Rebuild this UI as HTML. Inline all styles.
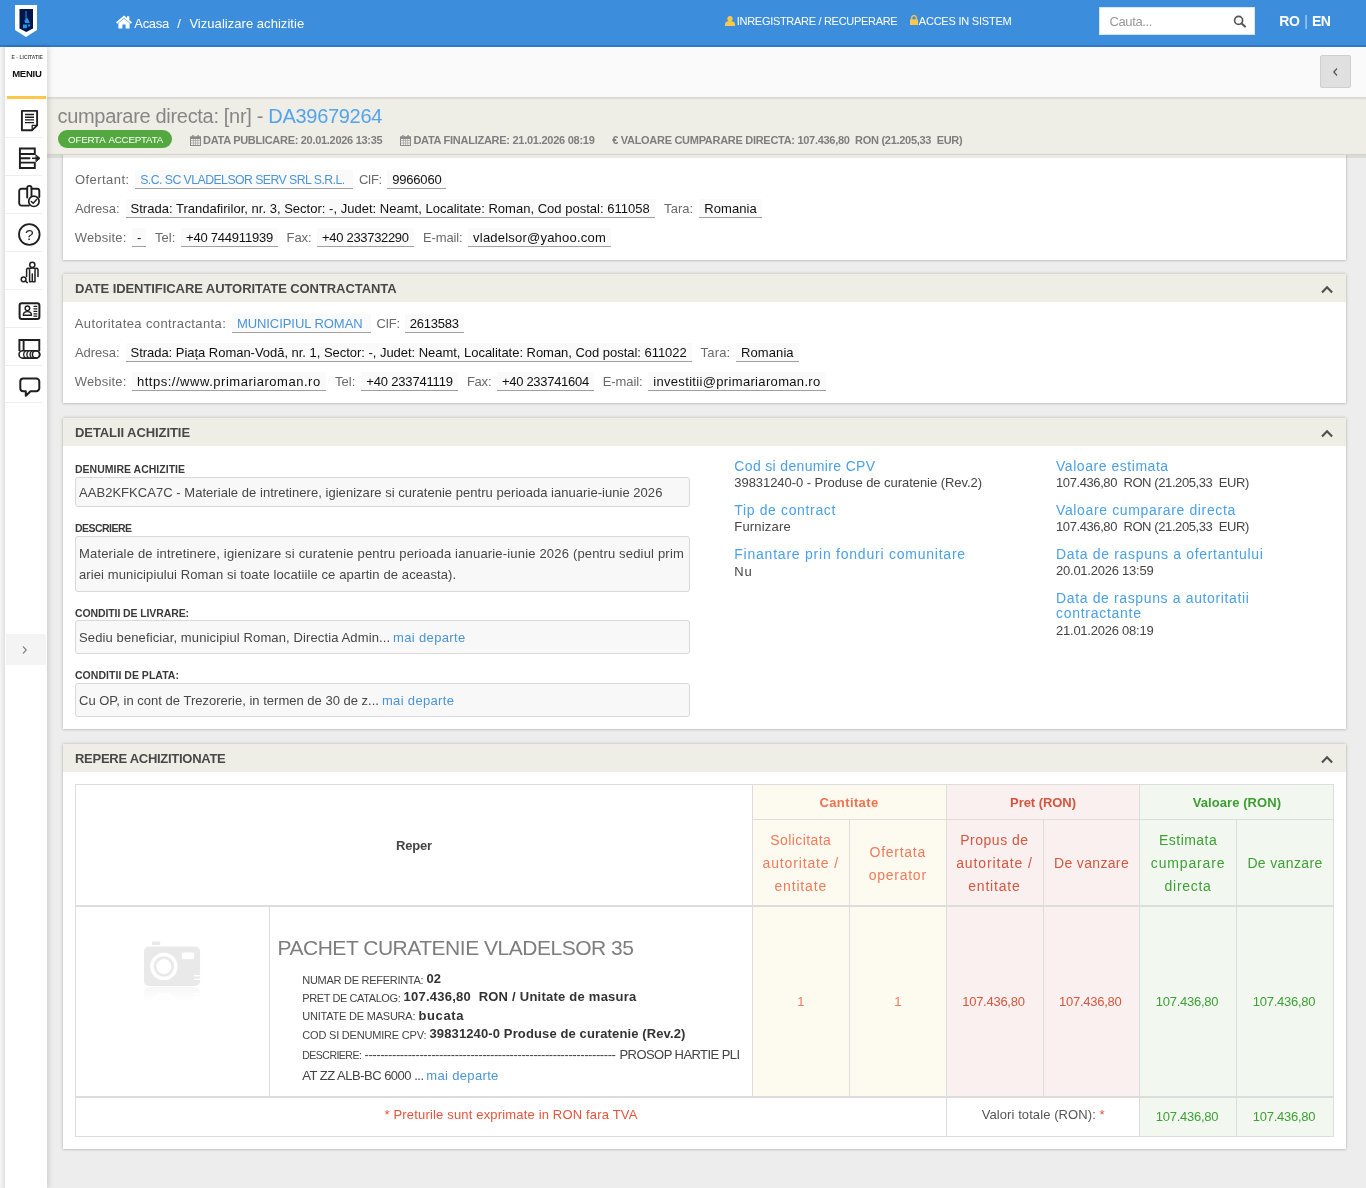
<!DOCTYPE html>
<html lang="ro">
<head>
<meta charset="utf-8">
<title>Vizualizare achizitie</title>
<style>
*{box-sizing:border-box}
html,body{margin:0;padding:0}
body{width:1366px;height:1188px;position:relative;overflow:hidden;background:#ededed;font-family:"Liberation Sans",sans-serif;font-size:13px;color:#555;line-height:1}
a{color:#4a94d8;text-decoration:none}
#wrap{position:absolute;left:0;top:0;width:1366px;height:1188px;will-change:transform}
.abs,.t,svg{position:absolute}
.t{white-space:nowrap}
#hdr{position:absolute;left:0;top:0;width:1366px;height:47px;background:#3c8ddc;border-bottom:2px solid #2f78c2}
#search{position:absolute;left:1099px;top:7px;width:156px;height:28px;background:#fff;border:1px solid #d8e6f3}
#tool{position:absolute;left:47px;top:47px;width:1319px;height:50px;background:#fafafa}
#back{position:absolute;left:1320px;top:55px;width:31px;height:33px;background:#e0e0e0;border:1px solid #cfcfcf;border-radius:2px}
#strip{position:absolute;left:0;top:47px;width:5px;height:1141px;background:linear-gradient(90deg,#f4f4f4,#e6e6e6)}
#side{position:absolute;left:5px;top:47px;width:42px;height:1141px;background:#fff;box-shadow:2px 0 5px rgba(0,0,0,.13);z-index:4}
#side .yl{position:absolute;left:2px;top:49px;width:39px;height:3px;background:#fdc748}
#side .sep{position:absolute;left:0;width:37px;height:1px;background:#eeeeee}
#exp{position:absolute;left:1px;top:587px;width:40px;height:31px;background:#f4f4f4}
#tbar{position:absolute;left:47px;top:97px;width:1319px;height:58px;background:#eeede6;border-top:1px solid #d9d8d1;border-bottom:1px solid #d3d2cb;box-shadow:inset 0 2px 2px -1px rgba(0,0,0,.07),0 3px 0 rgba(110,105,80,.14);z-index:3}
#badge{position:absolute;left:58px;top:130px;width:114px;height:18px;border-radius:9px;background:#53a93f;z-index:5}
.z5{z-index:5}
.panel{position:absolute;left:63px;width:1283px;background:#fff;box-shadow:0 0 3px rgba(0,0,0,.24),0 1px 2px rgba(0,0,0,.08)}
.ph{position:absolute;left:63px;width:1283px;height:28px;background:#eeede6}
.f{position:absolute;height:19px;background:#fafafa;border-bottom:1px solid #a0a0a0}
.bx{position:absolute;left:75px;width:615px;background:#f8f8f8;border:1px solid #d9d9d9;border-radius:3px}
.c{position:absolute;border-left:1px solid #ddd;border-top:1px solid #ddd}
.cy{background:#fdfbf0}
.cr{background:#f9f0ef}
.cg{background:#f2f8f0}
.ln{position:absolute;background:#ddd}
</style>
</head>
<body>
<div id="wrap">
<div id="hdr"></div>
<svg style="left:15px;top:5px;z-index:6" width="22" height="32" viewBox="0 0 22 32"><path d="M0 0H22V25L11 32L0 25Z" fill="#fff"/><path d="M4.500 4H18V23.500L11.200 27L4.500 23.500Z" fill="#04154a"/><path d="M10.500 6h1v8h-1z M9.500 15l3-2 2.500 5h-5z M8 19.500h4v3.800H8z M13 19.500h2.200v2H13z" fill="#1c9be8"/></svg>
<svg style="left:115.500px;top:15px" width="16" height="14" viewBox="0 0 16 14"><path d="M8 .5L0 7.300l1.200 1.400L8 3l6.800 5.700 1.200-1.400L13.300 5V1.300h-2.300v1.800z" fill="#fff"/><path d="M2.400 8.300L8 3.700l5.600 4.600v5.200H9.600V9.600H6.400v3.900h-4z" fill="#fff"/></svg>
<div class="t" style="left:134.3px;top:16.0px;font-size:13px;line-height:16px;color:#fff;letter-spacing:-0.308px;">Acasa</div>
<div class="t" style="left:177.3px;top:16.0px;font-size:13px;line-height:16px;color:#fff;">/</div>
<div class="t" style="left:189.4px;top:16.0px;font-size:13px;line-height:16px;color:#fff;letter-spacing:0.041px;">Vizualizare achizitie</div>
<svg style="left:725px;top:16px" width="10" height="10" viewBox="0 0 10 10"><circle cx="5" cy="2.700" r="2.600" fill="#fbc84b"/><path d="M0 10V8.300C0 6 2 5 5 5s5 1 5 3.300V10z" fill="#fbc84b"/></svg>
<div class="t" style="left:736.8px;top:15.0px;font-size:11px;line-height:13px;color:#fff;letter-spacing:-0.300px;">INREGISTRARE / RECUPERARE</div>
<svg style="left:910px;top:15px" width="8" height="10" viewBox="0 0 8 10"><path d="M0 4.300h8V10H0z" fill="#fbc84b"/><path d="M1.700 4.500V3a2.300 2.300 0 0 1 4.600 0v1.500" fill="none" stroke="#fbc84b" stroke-width="1.300"/></svg>
<div class="t" style="left:918.8px;top:15.0px;font-size:11px;line-height:13px;color:#fff;letter-spacing:-0.218px;">ACCES IN SISTEM</div>
<div id="search"></div>
<div class="t" style="left:1109.5px;top:14.0px;font-size:13px;line-height:16px;color:#999;letter-spacing:-0.379px;">Cauta...</div>
<svg style="left:1232.500px;top:15px" width="14" height="13" viewBox="0 0 14 13"><circle cx="5.600" cy="5.400" r="4" fill="none" stroke="#555" stroke-width="1.700"/><path d="M8.600 8.400L12 11.600" stroke="#555" stroke-width="2.100" stroke-linecap="round"/></svg>
<div class="t" style="left:1279.2px;top:13.0px;font-size:14px;line-height:17px;color:#fff;font-weight:bold;letter-spacing:-0.250px;">RO</div>
<div class="t" style="left:1304.3px;top:13.0px;font-size:14px;line-height:17px;color:#b9d6f2;">|</div>
<div class="t" style="left:1312.0px;top:13.0px;font-size:14px;line-height:17px;color:#fff;font-weight:bold;letter-spacing:-0.477px;">EN</div>
<div id="tool"></div>
<div id="back"><svg style="left:11px;top:11px" width="7" height="10" viewBox="0 0 7 10"><path d="M5 1.500L1.800 5 5 8.500" fill="none" stroke="#555" stroke-width="1.200"/></svg></div>
<div id="strip"></div>
<div id="side"><div class="yl"></div>
<div class="sep" style="top:90px"></div>
<div class="sep" style="top:128px"></div>
<div class="sep" style="top:166px"></div>
<div class="sep" style="top:204px"></div>
<div class="sep" style="top:242px"></div>
<div class="sep" style="top:280px"></div>
<div class="sep" style="top:318px"></div>
<div class="sep" style="top:355px"></div>
<svg style="left:0;top:0" width="42" height="370" viewBox="5 47 42 370" fill="none" stroke="#1f1f1f" stroke-width="1.900" stroke-linejoin="round" stroke-linecap="round">
<!-- 1 document -->
<path d="M21.900 110.900H37.100V125.300L32.200 130.200H21.900Z"/><path d="M32.200 130.200V125.300H37.100" stroke-width="1.300"/>
<path d="M25 114.500H34M25 117.200H34M25 119.900H34M25 122.600H34" stroke-width="1.400" stroke-linecap="butt"/>
<!-- 2 list arrow -->
<path d="M19.900 148.500H34.800V154H19.900ZM19.900 162.600H34.800V168H19.900ZM19.900 154V162.600M19.900 158.300H29.500" stroke-linejoin="miter"/>
<path d="M32 158.300H37" stroke-width="1.500" stroke-linecap="butt"/><path d="M36.300 155.200L40 158.300L36.300 161.400Z" fill="#1f1f1f" stroke-width="1"/>
<!-- 3 books check -->
<path d="M27 188.700H21.500a2.300 2.300 0 0 0-2.300 2.300V203.300a2.300 2.300 0 0 0 2.300 2.300H29"/>
<path d="M31.500 188.700H37a2.300 2.300 0 0 1 2.300 2.300V197"/>
<path d="M27.200 197.500V187.800a1.900 1.900 0 0 1 1.900-1.900h.5a1.900 1.900 0 0 1 1.900 1.900V196.500"/>
<circle cx="33.900" cy="201.300" r="5.200" fill="#fff" stroke-width="1.700"/><path d="M31.300 201.500L33.200 203.300L36.600 199.600" stroke-width="1.500"/>
<!-- 4 question -->
<circle cx="29.300" cy="234.500" r="10.300" stroke-width="1.800"/>
<text x="29.300" y="240" font-family="Liberation Sans, sans-serif" font-size="15.500" text-anchor="middle" fill="#1f1f1f" stroke="none">?</text>
<!-- 5 person search -->
<g stroke-width="1.500"><circle cx="32.300" cy="264.800" r="2.600"/>
<path d="M29.600 281.800V269.600a1.500 1.500 0 0 0-3 .4V276.500M35 281.800V269.600a1.500 1.500 0 0 1 3 .4V276.500M28 268.600Q32.300 267.400 36.600 268.600M32.300 274V281.800M29.600 281.800H31M33.600 281.800H35"/>
<circle cx="23.600" cy="279.300" r="2.400"/><path d="M25.400 281L27.300 282.600"/></g>
<!-- 6 id card -->
<rect x="19.600" y="303.300" width="19.800" height="15.600" rx="2.200" stroke-width="2"/>
<g stroke-width="1.400"><circle cx="27.400" cy="308.300" r="2.300"/><path d="M23.300 315.300Q23.300 311.600 27.400 311.600Q31.500 311.600 31.500 315.300Z"/>
<path d="M33.500 306.300H37.300M33.500 308.800H37.300M33.500 311.300H37.300M33.500 313.800H37.300M33.500 316.100H37.300" stroke-linecap="butt" stroke-width="1.300"/></g>
<!-- 7 shelf -->
<path d="M19.400 351V340H39.300V351M23.600 340V350.500" stroke-linejoin="miter" stroke-linecap="butt"/>
<g stroke-width="1.600"><rect x="19" y="350.700" width="20.800" height="7.400" rx="3.700"/><circle cx="36" cy="354.400" r="3.600"/>
<path d="M25.500 351A4 4 0 0 0 25.500 357.800M28.700 351A4 4 0 0 0 28.700 357.800M31.900 351A4 4 0 0 0 31.900 357.800" stroke-width="1.300"/></g>
<!-- 8 bubble -->
<path d="M23.300 378.500H36.300a3 3 0 0 1 3 3V388.200a3 3 0 0 1-3 3H30.500L25.800 395.800V391.200H23.300a3 3 0 0 1-3-3V381.500a3 3 0 0 1 3-3Z" stroke-width="2"/>
</svg>

<div id="exp"><svg style="left:15.300px;top:10.700px" width="7" height="10" viewBox="0 0 7 10"><path d="M2 1.500L5.200 5 2 8.500" fill="none" stroke="#666" stroke-width="1.100"/></svg></div>
</div>
<div class="t" style="left:11.5px;top:54.0px;font-size:5px;line-height:6px;color:#555;font-weight:bold;letter-spacing:0.043px;z-index:5;">E - LICITATIE</div>
<div class="t" style="left:12.2px;top:68.0px;font-size:9.5px;line-height:11px;color:#111;font-weight:bold;letter-spacing:-0.245px;z-index:5;">MENIU</div>
<div id="tbar"></div>
<div class="t" style="left:57.5px;top:104.0px;font-size:20px;line-height:24px;color:#868686;letter-spacing:-0.312px;z-index:5;">cumparare directa: [nr] - <span style="color:#54a4ec">DA39679264</span></div>
<div id="badge"></div>
<div class="t" style="left:68.0px;top:133.6px;font-size:9.7px;line-height:12px;color:#fff;letter-spacing:-0.156px;z-index:6;word-spacing:1.500px;">OFERTA ACCEPTATA</div>
<svg style="left:189.700px;top:134.500px;z-index:5" width="11" height="11" viewBox="0 0 11 11"><path d="M2.200 0h1.400v2.400H2.200zM7.400 0h1.400v2.400H7.400z" fill="#8a8a8a"/><path d="M0 1.300h11V11H0z" fill="#8a8a8a"/><path d="M1 4h2v1.500H1zM3.500 4h1.800v1.500H3.500zM5.800 4h1.800v1.500H5.800zM8.100 4H10v1.500H8.100zM1 6h2v1.700H1zM3.500 6h1.800v1.700H3.500zM5.800 6h1.800v1.700H5.800zM8.100 6H10v1.700H8.100zM1 8.200h2V10H1zM3.500 8.200h1.800V10H3.500zM5.800 8.200h1.800V10H5.800zM8.100 8.200H10V10H8.100z" fill="#eeede6"/></svg>
<div class="t" style="left:203.1px;top:134.0px;font-size:11px;line-height:13px;color:#7e7e7e;font-weight:bold;letter-spacing:-0.297px;z-index:5;">DATA PUBLICARE: 20.01.2026 13:35</div>
<svg style="left:400px;top:134.500px;z-index:5" width="11" height="11" viewBox="0 0 11 11"><path d="M2.200 0h1.400v2.400H2.200zM7.400 0h1.400v2.400H7.400z" fill="#8a8a8a"/><path d="M0 1.300h11V11H0z" fill="#8a8a8a"/><path d="M1 4h2v1.500H1zM3.500 4h1.800v1.500H3.500zM5.800 4h1.800v1.500H5.800zM8.100 4H10v1.500H8.100zM1 6h2v1.700H1zM3.500 6h1.800v1.700H3.500zM5.800 6h1.800v1.700H5.800zM8.100 6H10v1.700H8.100zM1 8.200h2V10H1zM3.500 8.200h1.800V10H3.500zM5.800 8.200h1.800V10H5.800zM8.100 8.200H10V10H8.100z" fill="#eeede6"/></svg>
<div class="t" style="left:413.4px;top:134.0px;font-size:11px;line-height:13px;color:#7e7e7e;font-weight:bold;letter-spacing:-0.267px;z-index:5;">DATA FINALIZARE: 21.01.2026 08:19</div>
<div class="t" style="left:612.2px;top:134.0px;font-size:11px;line-height:13px;color:#7e7e7e;font-weight:bold;letter-spacing:-0.292px;z-index:5;">€ VALOARE CUMPARARE DIRECTA: 107.436,80&nbsp; RON (21.205,33&nbsp; EUR)</div>
<div class="panel" style="top:100px;height:159.500px"></div>
<div class="t" style="left:74.9px;top:172.0px;font-size:13px;line-height:16px;color:#6a6a6a;letter-spacing:0.458px;">Ofertant:</div>
<div class="f" style="left:135.2px;top:170.0px;width:217.8px"></div>
<div class="t" style="left:140.2px;top:173.0px;font-size:12.3px;line-height:15px;color:#4a94d8;letter-spacing:-0.557px;">S.C. SC VLADELSOR SERV SRL S.R.L.</div>
<div class="t" style="left:358.9px;top:172.0px;font-size:13px;line-height:16px;color:#6a6a6a;letter-spacing:-0.466px;">CIF:</div>
<div class="f" style="left:387.2px;top:170.0px;width:59.3px"></div>
<div class="t" style="left:392.2px;top:172.0px;font-size:13px;line-height:16px;color:#111;letter-spacing:-0.189px;">9966060</div>
<div class="t" style="left:74.9px;top:201.0px;font-size:13px;line-height:16px;color:#6a6a6a;letter-spacing:-0.016px;">Adresa:</div>
<div class="f" style="left:125.5px;top:199.0px;width:529.3px"></div>
<div class="t" style="left:130.5px;top:201.0px;font-size:13px;line-height:16px;color:#111;letter-spacing:0.015px;">Strada: Trandafirilor, nr. 3, Sector: -, Judet: Neamt, Localitate: Roman, Cod postal: 611058</div>
<div class="t" style="left:664.1px;top:201.0px;font-size:13px;line-height:16px;color:#6a6a6a;letter-spacing:0.039px;">Tara:</div>
<div class="f" style="left:699.3px;top:199.0px;width:62.5px"></div>
<div class="t" style="left:704.3px;top:201.0px;font-size:13px;line-height:16px;color:#111;letter-spacing:0.067px;">Romania</div>
<div class="t" style="left:74.7px;top:230.0px;font-size:13px;line-height:16px;color:#6a6a6a;letter-spacing:0.195px;">Website:</div>
<div class="f" style="left:131.9px;top:228.0px;width:13.7px"></div>
<div class="t" style="left:136.9px;top:230.0px;font-size:13px;line-height:16px;color:#111;letter-spacing:-0.644px;">-</div>
<div class="t" style="left:155.0px;top:230.0px;font-size:13px;line-height:16px;color:#6a6a6a;letter-spacing:0.041px;">Tel:</div>
<div class="f" style="left:181.0px;top:228.0px;width:97.0px"></div>
<div class="t" style="left:186.0px;top:230.0px;font-size:13px;line-height:16px;color:#111;letter-spacing:-0.214px;">+40 744911939</div>
<div class="t" style="left:286.6px;top:230.0px;font-size:13px;line-height:16px;color:#6a6a6a;letter-spacing:-0.099px;">Fax:</div>
<div class="f" style="left:317.1px;top:228.0px;width:96.6px"></div>
<div class="t" style="left:322.1px;top:230.0px;font-size:13px;line-height:16px;color:#111;letter-spacing:-0.318px;">+40 233732290</div>
<div class="t" style="left:423.0px;top:230.0px;font-size:13px;line-height:16px;color:#6a6a6a;letter-spacing:-0.136px;">E-mail:</div>
<div class="f" style="left:468.1px;top:228.0px;width:142.9px"></div>
<div class="t" style="left:473.1px;top:230.0px;font-size:13px;line-height:16px;color:#111;letter-spacing:0.214px;">vladelsor@yahoo.com</div>
<div class="panel" style="top:274px;height:129px"></div><div class="ph" style="top:274px"></div>
<div class="t" style="left:75.0px;top:281.0px;font-size:13px;line-height:16px;color:#484848;font-weight:bold;letter-spacing:-0.073px;">DATE IDENTIFICARE AUTORITATE CONTRACTANTA</div>
<svg style="left:1321px;top:285px" width="12" height="9" viewBox="0 0 12 9"><path d="M1 7.400L6.050 2.300L11.100 7.400" fill="none" stroke="#505050" stroke-width="2.200"/></svg>
<div class="t" style="left:74.7px;top:316.0px;font-size:13px;line-height:16px;color:#6a6a6a;letter-spacing:0.394px;">Autoritatea contractanta:</div>
<div class="f" style="left:231.9px;top:314.0px;width:139.1px"></div>
<div class="t" style="left:236.9px;top:316.0px;font-size:13px;line-height:16px;color:#4a94d8;letter-spacing:-0.059px;">MUNICIPIUL ROMAN</div>
<div class="t" style="left:376.6px;top:316.0px;font-size:13px;line-height:16px;color:#6a6a6a;letter-spacing:-0.366px;">CIF:</div>
<div class="f" style="left:404.8px;top:314.0px;width:59.0px"></div>
<div class="t" style="left:409.8px;top:316.0px;font-size:13px;line-height:16px;color:#111;letter-spacing:-0.232px;">2613583</div>
<div class="t" style="left:74.9px;top:345.0px;font-size:13px;line-height:16px;color:#6a6a6a;letter-spacing:-0.016px;">Adresa:</div>
<div class="f" style="left:125.5px;top:343.0px;width:566.2px"></div>
<div class="t" style="left:130.5px;top:345.0px;font-size:13px;line-height:16px;color:#111;letter-spacing:-0.030px;">Strada: Piața Roman-Vodă, nr. 1, Sector: -, Judet: Neamt, Localitate: Roman, Cod postal: 611022</div>
<div class="t" style="left:700.6px;top:345.0px;font-size:13px;line-height:16px;color:#6a6a6a;letter-spacing:0.179px;">Tara:</div>
<div class="f" style="left:736.0px;top:343.0px;width:62.7px"></div>
<div class="t" style="left:741.0px;top:345.0px;font-size:13px;line-height:16px;color:#111;letter-spacing:0.096px;">Romania</div>
<div class="t" style="left:74.7px;top:374.0px;font-size:13px;line-height:16px;color:#6a6a6a;letter-spacing:0.195px;">Website:</div>
<div class="f" style="left:131.9px;top:372.0px;width:193.8px"></div>
<div class="t" style="left:136.9px;top:374.0px;font-size:13px;line-height:16px;color:#111;letter-spacing:0.526px;">https://www.primariaroman.ro</div>
<div class="t" style="left:335.0px;top:374.0px;font-size:13px;line-height:16px;color:#6a6a6a;letter-spacing:0.041px;">Tel:</div>
<div class="f" style="left:361.3px;top:372.0px;width:96.5px"></div>
<div class="t" style="left:366.3px;top:374.0px;font-size:13px;line-height:16px;color:#111;letter-spacing:-0.178px;">+40 233741119</div>
<div class="t" style="left:466.9px;top:374.0px;font-size:13px;line-height:16px;color:#6a6a6a;letter-spacing:-0.224px;">Fax:</div>
<div class="f" style="left:496.9px;top:372.0px;width:97.0px"></div>
<div class="t" style="left:501.9px;top:374.0px;font-size:13px;line-height:16px;color:#111;letter-spacing:-0.287px;">+40 233741604</div>
<div class="t" style="left:602.8px;top:374.0px;font-size:13px;line-height:16px;color:#6a6a6a;letter-spacing:-0.093px;">E-mail:</div>
<div class="f" style="left:648.2px;top:372.0px;width:177.4px"></div>
<div class="t" style="left:653.2px;top:374.0px;font-size:13px;line-height:16px;color:#111;letter-spacing:0.333px;">investitii@primariaroman.ro</div>
<div class="panel" style="top:418px;height:311px"></div><div class="ph" style="top:418px"></div>
<div class="t" style="left:75.0px;top:425.0px;font-size:13px;line-height:16px;color:#484848;font-weight:bold;letter-spacing:-0.075px;">DETALII ACHIZITIE</div>
<svg style="left:1321px;top:429px" width="12" height="9" viewBox="0 0 12 9"><path d="M1 7.400L6.050 2.300L11.100 7.400" fill="none" stroke="#505050" stroke-width="2.200"/></svg>
<div class="t" style="left:75.0px;top:463.0px;font-size:10.5px;line-height:13px;color:#3a3a3a;font-weight:bold;letter-spacing:0.007px;">DENUMIRE ACHIZITIE</div>
<div class="bx" style="top:477px;height:30px"></div>
<div class="t" style="left:79.0px;top:485.0px;font-size:13px;line-height:16px;color:#474747;letter-spacing:0.039px;">AAB2KFKCA7C - Materiale de intretinere, igienizare si curatenie pentru perioada ianuarie-iunie 2026</div>
<div class="t" style="left:75.0px;top:522.0px;font-size:10.5px;line-height:13px;color:#3a3a3a;font-weight:bold;letter-spacing:-0.530px;">DESCRIERE</div>
<div class="bx" style="top:536px;height:56px"></div>
<div class="t" style="left:79.0px;top:546.0px;font-size:13px;line-height:16px;color:#474747;letter-spacing:0.180px;">Materiale de intretinere, igienizare si curatenie pentru perioada ianuarie-iunie 2026 (pentru sediul prim</div>
<div class="t" style="left:79.0px;top:567.0px;font-size:13px;line-height:16px;color:#474747;letter-spacing:0.109px;">ariei municipiului Roman si toate locatiile ce apartin de aceasta).</div>
<div class="t" style="left:75.0px;top:607.0px;font-size:10.5px;line-height:13px;color:#3a3a3a;font-weight:bold;letter-spacing:-0.105px;">CONDITII DE LIVRARE:</div>
<div class="bx" style="top:620px;height:34px"></div>
<div class="t" style="left:79.0px;top:630.0px;font-size:13px;line-height:16px;color:#474747;letter-spacing:0.118px;">Sediu beneficiar, municipiul Roman, Directia Admin...</div>
<div class="t" style="left:393.1px;top:630.0px;font-size:13px;line-height:16px;color:#474747;letter-spacing:0.340px;"><a>mai departe</a></div>
<div class="t" style="left:75.0px;top:669.0px;font-size:10.5px;line-height:13px;color:#3a3a3a;font-weight:bold;letter-spacing:0.031px;">CONDITII DE PLATA:</div>
<div class="bx" style="top:683px;height:34px"></div>
<div class="t" style="left:79.0px;top:693.0px;font-size:13px;line-height:16px;color:#474747;letter-spacing:0.006px;">Cu OP, in cont de Trezorerie, in termen de 30 de z...</div>
<div class="t" style="left:381.9px;top:693.0px;font-size:13px;line-height:16px;color:#474747;letter-spacing:0.340px;"><a>mai departe</a></div>
<div class="t" style="left:734.3px;top:458.0px;font-size:14px;line-height:17px;color:#4ba0e8;letter-spacing:0.346px;">Cod si denumire CPV</div>
<div class="t" style="left:734.3px;top:475.0px;font-size:13px;line-height:16px;color:#454545;letter-spacing:-0.052px;">39831240-0 - Produse de curatenie (Rev.2)</div>
<div class="t" style="left:734.3px;top:502.0px;font-size:14px;line-height:17px;color:#4ba0e8;letter-spacing:0.640px;">Tip de contract</div>
<div class="t" style="left:734.3px;top:519.0px;font-size:13px;line-height:16px;color:#454545;letter-spacing:0.186px;">Furnizare</div>
<div class="t" style="left:734.3px;top:546.0px;font-size:14px;line-height:17px;color:#4ba0e8;letter-spacing:0.769px;">Finantare prin fonduri comunitare</div>
<div class="t" style="left:734.3px;top:564.0px;font-size:13px;line-height:16px;color:#454545;letter-spacing:0.838px;">Nu</div>
<div class="t" style="left:1056.0px;top:458.0px;font-size:14px;line-height:17px;color:#4ba0e8;letter-spacing:0.543px;">Valoare estimata</div>
<div class="t" style="left:1056.0px;top:475.0px;font-size:13px;line-height:16px;color:#454545;letter-spacing:-0.405px;">107.436,80&nbsp; RON (21.205,33&nbsp; EUR)</div>
<div class="t" style="left:1056.0px;top:502.0px;font-size:14px;line-height:17px;color:#4ba0e8;letter-spacing:0.639px;">Valoare cumparare directa</div>
<div class="t" style="left:1056.0px;top:519.0px;font-size:13px;line-height:16px;color:#454545;letter-spacing:-0.405px;">107.436,80&nbsp; RON (21.205,33&nbsp; EUR)</div>
<div class="t" style="left:1056.0px;top:546.0px;font-size:14px;line-height:17px;color:#4ba0e8;letter-spacing:0.667px;">Data de raspuns a ofertantului</div>
<div class="t" style="left:1056.0px;top:563.0px;font-size:13px;line-height:16px;color:#454545;letter-spacing:-0.232px;">20.01.2026 13:59</div>
<div class="t" style="left:1056.0px;top:590.0px;font-size:14px;line-height:17px;color:#4ba0e8;letter-spacing:0.634px;">Data de raspuns a autoritatii</div>
<div class="t" style="left:1056.0px;top:605.0px;font-size:14px;line-height:17px;color:#4ba0e8;letter-spacing:0.720px;">contractante</div>
<div class="t" style="left:1056.0px;top:623.0px;font-size:13px;line-height:16px;color:#454545;letter-spacing:-0.232px;">21.01.2026 08:19</div>
<div class="panel" style="top:744px;height:405px"></div><div class="ph" style="top:744px"></div>
<div class="t" style="left:75.0px;top:751.0px;font-size:13px;line-height:16px;color:#484848;font-weight:bold;letter-spacing:-0.276px;">REPERE ACHIZITIONATE</div>
<svg style="left:1321px;top:755px" width="12" height="9" viewBox="0 0 12 9"><path d="M1 7.400L6.050 2.300L11.100 7.400" fill="none" stroke="#505050" stroke-width="2.200"/></svg>
<div class="abs" style="left:75px;top:784px;width:1259px;height:353px;border:1px solid #ddd"></div>
<div class="c cy" style="left:752px;top:784px;width:194px;height:36px"></div>
<div class="c cr" style="left:946px;top:784px;width:193px;height:36px"></div>
<div class="c cg" style="left:1139px;top:784px;width:194px;height:36px"></div>
<div class="c cy" style="left:752px;top:819px;width:97px;height:86px"></div>
<div class="c cy" style="left:752px;top:906px;width:97px;height:190px"></div>
<div class="c cy" style="left:849px;top:819px;width:97px;height:86px"></div>
<div class="c cy" style="left:849px;top:906px;width:97px;height:190px"></div>
<div class="c cr" style="left:946px;top:819px;width:97px;height:86px"></div>
<div class="c cr" style="left:946px;top:906px;width:97px;height:190px"></div>
<div class="c cr" style="left:1043px;top:819px;width:96px;height:86px"></div>
<div class="c cr" style="left:1043px;top:906px;width:96px;height:190px"></div>
<div class="c cg" style="left:1139px;top:819px;width:97px;height:86px"></div>
<div class="c cg" style="left:1139px;top:906px;width:97px;height:190px"></div>
<div class="c cg" style="left:1236px;top:819px;width:97px;height:86px"></div>
<div class="c cg" style="left:1236px;top:906px;width:97px;height:190px"></div>
<div class="c cg" style="left:1139px;top:1097px;width:97px;height:39px"></div>
<div class="c cg" style="left:1236px;top:1097px;width:97px;height:39px"></div>
<div class="ln" style="left:946px;top:1097px;width:1px;height:39px"></div>
<div class="ln" style="left:76px;top:904.500px;width:1257px;height:2px"></div>
<div class="ln" style="left:76px;top:1095.500px;width:1257px;height:2px"></div>
<div class="ln" style="left:269px;top:906px;width:1px;height:190px"></div>
<div class="t" style="left:396.0px;top:838.0px;font-size:13px;line-height:16px;color:#444;font-weight:bold;letter-spacing:-0.172px;">Reper</div>
<div class="t" style="left:819.5px;top:795.0px;font-size:13px;line-height:16px;color:#f2714d;font-weight:bold;letter-spacing:0.375px;">Cantitate</div>
<div class="t" style="left:1010.0px;top:795.0px;font-size:13px;line-height:16px;color:#d5553c;font-weight:bold;letter-spacing:-0.045px;">Pret (RON)</div>
<div class="t" style="left:1192.8px;top:795.0px;font-size:13px;line-height:16px;color:#3c9d31;font-weight:bold;letter-spacing:0.068px;">Valoare (RON)</div>
<div class="t" style="left:770.3px;top:832.0px;font-size:14px;line-height:17px;color:#f07a5b;letter-spacing:0.419px;">Solicitata</div>
<div class="t" style="left:762.5px;top:855.0px;font-size:14px;line-height:17px;color:#f07a5b;letter-spacing:0.862px;">autoritate /</div>
<div class="t" style="left:774.5px;top:878.0px;font-size:14px;line-height:17px;color:#f07a5b;letter-spacing:0.820px;">entitate</div>
<div class="t" style="left:869.5px;top:844.0px;font-size:14px;line-height:17px;color:#f07a5b;letter-spacing:0.738px;">Ofertata</div>
<div class="t" style="left:868.8px;top:867.0px;font-size:14px;line-height:17px;color:#f07a5b;letter-spacing:0.730px;">operator</div>
<div class="t" style="left:960.2px;top:832.0px;font-size:14px;line-height:17px;color:#d4573f;letter-spacing:0.519px;">Propus de</div>
<div class="t" style="left:956.2px;top:855.0px;font-size:14px;line-height:17px;color:#d4573f;letter-spacing:0.862px;">autoritate /</div>
<div class="t" style="left:968.2px;top:878.0px;font-size:14px;line-height:17px;color:#d4573f;letter-spacing:0.820px;">entitate</div>
<div class="t" style="left:1054.0px;top:855.0px;font-size:14px;line-height:17px;color:#d4573f;letter-spacing:0.341px;">De vanzare</div>
<div class="t" style="left:1159.0px;top:832.0px;font-size:14px;line-height:17px;color:#3fa036;letter-spacing:0.466px;">Estimata</div>
<div class="t" style="left:1150.8px;top:855.0px;font-size:14px;line-height:17px;color:#3fa036;letter-spacing:0.853px;">cumparare</div>
<div class="t" style="left:1164.6px;top:878.0px;font-size:14px;line-height:17px;color:#3fa036;letter-spacing:0.696px;">directa</div>
<div class="t" style="left:1247.4px;top:855.0px;font-size:14px;line-height:17px;color:#3fa036;letter-spacing:0.361px;">De vanzare</div>
<div class="t" style="left:797.3px;top:994.0px;font-size:13px;line-height:16px;color:#f07a5b;letter-spacing:-0.234px;">1</div>
<div class="t" style="left:894.3px;top:994.0px;font-size:13px;line-height:16px;color:#f07a5b;letter-spacing:-0.234px;">1</div>
<div class="t" style="left:962.2px;top:994.0px;font-size:13px;line-height:16px;color:#d4573f;letter-spacing:-0.258px;">107.436,80</div>
<div class="t" style="left:1059.0px;top:994.0px;font-size:13px;line-height:16px;color:#d4573f;letter-spacing:-0.258px;">107.436,80</div>
<div class="t" style="left:1155.8px;top:994.0px;font-size:13px;line-height:16px;color:#3fa036;letter-spacing:-0.258px;">107.436,80</div>
<div class="t" style="left:1252.8px;top:994.0px;font-size:13px;line-height:16px;color:#3fa036;letter-spacing:-0.258px;">107.436,80</div>
<div class="t" style="left:1155.8px;top:1109.0px;font-size:13px;line-height:16px;color:#3fa036;letter-spacing:-0.258px;">107.436,80</div>
<div class="t" style="left:1252.8px;top:1109.0px;font-size:13px;line-height:16px;color:#3fa036;letter-spacing:-0.258px;">107.436,80</div>
<div class="t" style="left:384.5px;top:1107.0px;font-size:13px;line-height:16px;color:#e8533a;letter-spacing:0.169px;">* Preturile sunt exprimate in RON fara TVA</div>
<div class="t" style="left:981.7px;top:1107.0px;font-size:13px;line-height:16px;color:#555;letter-spacing:0.085px;">Valori totale (RON): <span style="color:#e8533a">*</span></div>
<svg style="left:140px;top:938px" width="64" height="66" viewBox="140 938 64 66"><defs><linearGradient id="rg" x1="0" y1="0" x2="0" y2="1"><stop offset="0" stop-color="#fff" stop-opacity=".42"/><stop offset="1" stop-color="#fff" stop-opacity="0"/></linearGradient><mask id="rm" maskUnits="userSpaceOnUse" x="140" y="986" width="64" height="18"><rect x="140" y="986.500" width="64" height="14" fill="url(#rg)"/></mask></defs><rect x="144" y="946.600" width="56.100" height="39.400" rx="5" fill="#e9e9e9"/><rect x="151.800" y="941.600" width="8.500" height="3.500" rx="1.200" fill="#e9e9e9"/><circle cx="163.900" cy="966.500" r="13.700" fill="#fff"/><circle cx="163.900" cy="966.500" r="10.200" fill="#e9e9e9"/><circle cx="163.900" cy="966.500" r="7.500" fill="#fff"/><rect x="182" y="952.600" width="12.200" height="6.600" rx="1.200" fill="#fff"/><rect x="194" y="975" width="6.200" height="1.400" fill="#fff"/><rect x="194" y="978.600" width="6.200" height="1.400" fill="#fff"/><g mask="url(#rm)"><g transform="translate(0,1973) scale(1,-1)"><rect x="144" y="946.600" width="56.100" height="39.400" rx="5" fill="#e9e9e9"/><rect x="151.800" y="941.600" width="8.500" height="3.500" rx="1.200" fill="#e9e9e9"/><circle cx="163.900" cy="966.500" r="13.700" fill="#fff"/><circle cx="163.900" cy="966.500" r="10.200" fill="#e9e9e9"/><circle cx="163.900" cy="966.500" r="7.500" fill="#fff"/><rect x="182" y="952.600" width="12.200" height="6.600" rx="1.200" fill="#fff"/><rect x="194" y="975" width="6.200" height="1.400" fill="#fff"/><rect x="194" y="978.600" width="6.200" height="1.400" fill="#fff"/></g></g></svg>
<div class="t" style="left:277.5px;top:935.0px;font-size:21px;line-height:25px;color:#7d7d7d;letter-spacing:-0.481px;">PACHET CURATENIE VLADELSOR 35</div>
<div class="t" style="left:302.3px;top:974.0px;font-size:11px;line-height:13px;color:#444;letter-spacing:-0.280px;">NUMAR DE REFERINTA:</div>
<div class="t" style="left:426.5px;top:971.0px;font-size:13px;line-height:16px;color:#333;font-weight:bold;letter-spacing:0.016px;">02</div>
<div class="t" style="left:302.3px;top:992.0px;font-size:11px;line-height:13px;color:#444;letter-spacing:-0.408px;">PRET DE CATALOG:</div>
<div class="t" style="left:403.5px;top:989.0px;font-size:13px;line-height:16px;color:#333;font-weight:bold;letter-spacing:0.237px;">107.436,80&nbsp; RON / Unitate de masura</div>
<div class="t" style="left:302.3px;top:1010.0px;font-size:11px;line-height:13px;color:#444;letter-spacing:-0.219px;">UNITATE DE MASURA:</div>
<div class="t" style="left:418.5px;top:1008.0px;font-size:13px;line-height:16px;color:#333;font-weight:bold;letter-spacing:0.599px;">bucata</div>
<div class="t" style="left:302.3px;top:1029.0px;font-size:11px;line-height:13px;color:#444;letter-spacing:-0.198px;">COD SI DENUMIRE CPV:</div>
<div class="t" style="left:429.5px;top:1026.0px;font-size:13px;line-height:16px;color:#333;font-weight:bold;letter-spacing:0.123px;">39831240-0 Produse de curatenie (Rev.2)</div>
<div class="t" style="left:302.3px;top:1049.0px;font-size:10.5px;line-height:13px;color:#444;letter-spacing:-0.519px;">DESCRIERE:</div>
<div class="t" style="left:364.5px;top:1047.0px;font-size:13px;line-height:16px;color:#444;letter-spacing:-0.407px;">----------------------------------------------------------------</div>
<div class="t" style="left:619.5px;top:1047.0px;font-size:13px;line-height:16px;color:#444;letter-spacing:-0.562px;">PROSOP HARTIE PLI</div>
<div class="t" style="left:302.3px;top:1068.0px;font-size:13px;line-height:16px;color:#444;letter-spacing:-0.502px;">AT ZZ ALB-BC 6000 ...</div>
<div class="t" style="left:426.3px;top:1068.0px;font-size:13px;line-height:16px;color:#444;letter-spacing:0.340px;"><a>mai departe</a></div>
</div>
</body>
</html>
